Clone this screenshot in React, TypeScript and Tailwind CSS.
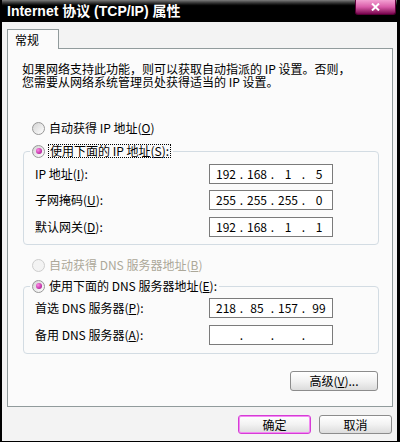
import { Fragment } from "react";

const Radio = ({ checked, disabled }: { checked?: boolean; disabled?: boolean }) => (
  <span
    className={
      disabled
        ? "flex h-[13px] w-[13px] shrink-0 items-center justify-center rounded-full border border-[#cdcdcd] bg-[#f3f3f3]"
        : "flex h-[13px] w-[13px] shrink-0 items-center justify-center rounded-full border border-[#979797] bg-gradient-to-br from-[#d4d4d4] to-white"
    }
  >
    {checked && (
      <span className="h-[6px] w-[6px] rounded-full bg-[radial-gradient(circle_at_35%_35%,#ff8ae6,#9c0084)]" />
    )}
  </span>
);

const IpField = ({ parts }: { parts: string[] }) => (
  <div className="flex h-[20px] w-[124px] shrink-0 items-center border border-[#7b7b7b] bg-white pl-[3px] leading-[12px]">
    {parts.map((p, i) => (
      <Fragment key={i}>
        {i > 0 && <span className="w-[5px] text-center">.</span>}
        <span className="w-[26px] text-center">{p}</span>
      </Fragment>
    ))}
  </div>
);

const Row = ({ label, parts, className }: { label: React.ReactNode; parts: string[]; className?: string }) => (
  <div className={"flex items-center " + (className || "")}>
    <span className="w-[185px] shrink-0 pl-[11px] leading-[12px]">{label}</span>
    <IpField parts={parts} />
  </div>
);

const Button = ({ children, focused, className }: { children: React.ReactNode; focused?: boolean; className?: string }) => (
  <button
    className={
      (focused
        ? "border-[#d63cd6] shadow-[inset_0_0_0_1px_#f28af2] "
        : "border-[#8c8c8c] ") +
      "flex items-center justify-center rounded-[3px] border bg-gradient-to-b from-white via-[#f2f2f2] to-[#dcdcdc] leading-[12px] " +
      (className || "")
    }
  >
    {children}
  </button>
);

export default function App() {
  return (
    <div className="flex h-[442px] w-[400px] flex-col border-b border-l-2 border-r-[3px] border-black bg-[#f3f3f3] font-['Noto_Sans_CJK_SC',sans-serif] text-[12px] text-black">
      {/* title bar */}
      <div className="flex h-[22px] shrink-0 items-start justify-between bg-gradient-to-b from-[#7c7c7c] via-black via-[30%] to-black">
        <span className="pl-[5px] pt-[3px] font-['Liberation_Sans','Noto_Sans_CJK_SC',sans-serif] text-[14px] font-bold leading-[16px] text-white">
          Internet 协议 (TCP/IP) 属性
        </span>
        <div className="mr-[1px] flex h-[15px] w-[41px] items-center justify-center rounded-b-[3px] border-x border-b border-[#5a0038] bg-gradient-to-b from-[#f2a0d2] via-[#d85aa8] to-[#7a0050]">
          <svg width="9" height="8" viewBox="0 0 9 8">
            <path d="M1 0.5 L8 7.5 M8 0.5 L1 7.5" stroke="white" strokeWidth="2" />
          </svg>
        </div>
      </div>

      {/* tab header */}
      <div className="mt-[7px] flex pl-[5px]">
        <div className="relative z-10 -mb-[1px] flex h-[20px] w-[52px] items-center border-x border-t border-[#919b9c] bg-[#fbfbfb] pl-[7px] leading-[12px]">
          常规
        </div>
      </div>

      {/* tab panel */}
      <div className="ml-[5px] flex h-[359px] w-[386px] flex-col border border-[#919b9c] bg-[#fbfbfb] pt-[13px]">
        <p className="pl-[14px] leading-[13px] whitespace-nowrap">
          如果网络支持此功能，则可以获取自动指派的 IP 设置。否则，
          <br />
          您需要从网络系统管理员处获得适当的 IP 设置。
        </p>

        <div className="mt-[32px] flex h-[16px] items-center gap-[4px] pl-[24px] leading-[12px]">
          <Radio />
          <span>自动获得 IP 地址(<u>O</u>)</span>
        </div>

        <fieldset className="ml-[15px] mr-[13px] mt-[7px] rounded-[4px] border border-[#d3dce3] pb-[7px] pt-[5px]">
          <legend className="ml-[6px] pr-[2px]">
            <div className="flex h-[16px] items-center gap-[3px] pl-[2px]">
              <Radio checked />
              <span className="border border-dotted border-black px-[1px] leading-[12px]">
                使用下面的 IP 地址(<u>S</u>):
              </span>
            </div>
          </legend>
          <Row label={<>IP 地址(<u>I</u>):</>} parts={["192", "168", "1", "5"]} />
          <Row className="mt-[6px]" label={<>子网掩码(<u>U</u>):</>} parts={["255", "255", "255", "0"]} />
          <Row className="mt-[7px]" label={<>默认网关(<u>D</u>):</>} parts={["192", "168", "1", "1"]} />
        </fieldset>

        <div className="mt-[12px] flex h-[16px] items-center gap-[4px] pl-[24px] leading-[12px] text-[#aca899]">
          <Radio disabled />
          <span>自动获得 DNS 服务器地址(<u>B</u>)</span>
        </div>

        <fieldset className="ml-[15px] mr-[13px] mt-[5px] rounded-[4px] border border-[#d3dce3] pb-[8px] pt-[4px]">
          <legend className="ml-[6px] pr-[2px]">
            <div className="flex h-[16px] items-center gap-[4px] pl-[2px] leading-[12px]">
              <Radio checked />
              <span>使用下面的 DNS 服务器地址(<u>E</u>):</span>
            </div>
          </legend>
          <Row label={<>首选 DNS 服务器(<u>P</u>):</>} parts={["218", "85", "157", "99"]} />
          <Row className="mt-[7px]" label={<>备用 DNS 服务器(<u>A</u>):</>} parts={["", "", "", ""]} />
        </fieldset>

        <div className="mr-[14px] mt-[17px] flex justify-end">
          <Button className="h-[20px] w-[88px]">
            高级(<u>V</u>)...
          </Button>
        </div>
      </div>

      {/* dialog buttons */}
      <div className="mt-[8px] flex justify-end gap-[8px] pr-[5px]">
        <Button focused className="h-[19px] w-[73px]">
          确定
        </Button>
        <Button className="h-[19px] w-[73px]">取消</Button>
      </div>
    </div>
  );
}
